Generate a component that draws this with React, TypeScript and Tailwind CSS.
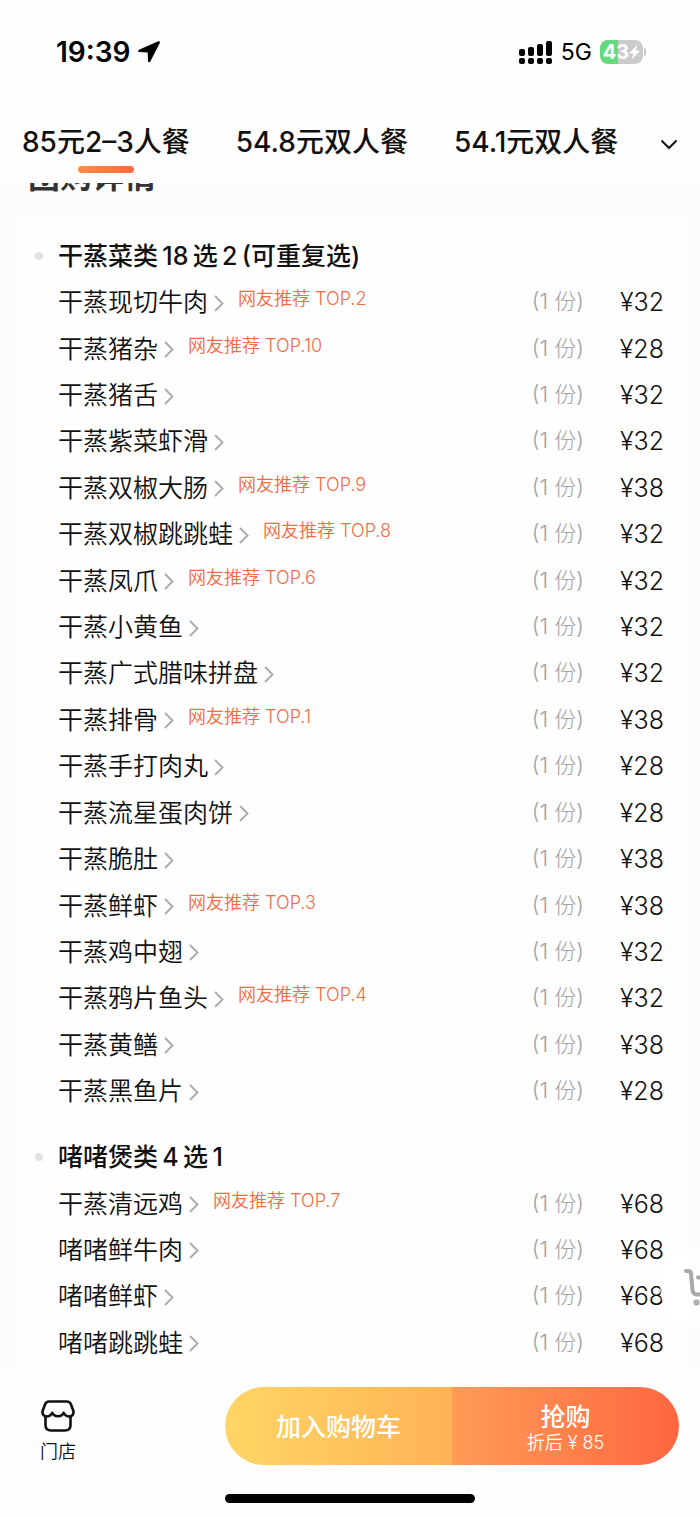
type Dish = { name: string; price: number; top?: number };

type Group = { title: string; dishes: Dish[] };

const tabs = ["85元2–3人餐", "54.8元双人餐", "54.1元双人餐"];

// titles use thin spaces around the counts
const groups: Group[] = [
  {
    title: "干蒸菜类\u200918\u2009选\u20092\u2009(可重复选)",
    dishes: [
      { name: "干蒸现切牛肉", price: 32, top: 2 },
      { name: "干蒸猪杂", price: 28, top: 10 },
      { name: "干蒸猪舌", price: 32 },
      { name: "干蒸紫菜虾滑", price: 32 },
      { name: "干蒸双椒大肠", price: 38, top: 9 },
      { name: "干蒸双椒跳跳蛙", price: 32, top: 8 },
      { name: "干蒸凤爪", price: 32, top: 6 },
      { name: "干蒸小黄鱼", price: 32 },
      { name: "干蒸广式腊味拼盘", price: 32 },
      { name: "干蒸排骨", price: 38, top: 1 },
      { name: "干蒸手打肉丸", price: 28 },
      { name: "干蒸流星蛋肉饼", price: 28 },
      { name: "干蒸脆肚", price: 38 },
      { name: "干蒸鲜虾", price: 38, top: 3 },
      { name: "干蒸鸡中翅", price: 32 },
      { name: "干蒸鸦片鱼头", price: 32, top: 4 },
      { name: "干蒸黄鳝", price: 38 },
      { name: "干蒸黑鱼片", price: 28 },
    ],
  },
  {
    title: "啫啫煲类\u20094\u2009选\u20091",
    dishes: [
      { name: "干蒸清远鸡", price: 68, top: 7 },
      { name: "啫啫鲜牛肉", price: 68 },
      { name: "啫啫鲜虾", price: 68 },
      { name: "啫啫跳跳蛙", price: 68 },
    ],
  },
];

const StatusBar = () => {
  return (
    <div className="flex h-[104px] items-center justify-between pr-[54px] pl-14 text-black">
      <div className="flex items-center gap-2">
        <span className="text-[28px] font-semibold">19:39</span>
        <svg className="h-[22px] w-[22px]" viewBox="0 0 22 22" fill="currentColor">
          <path d="M20.2.3 1 8.8c-1.3.6-1 2.2.5 2.3l8.2.3.3 8.5c0 1.6 1.7 1.9 2.3.6L21.8 1.9C22.2.8 21.3-.2 20.2.3z" />
        </svg>
      </div>
      <div className="flex items-center gap-2">
        <svg className="h-[23px] w-[34px]" viewBox="0 0 34 23" fill="currentColor">
          <rect x="0" y="8" width="6" height="7" rx="2" />
          <rect x="9" y="6" width="6" height="9" rx="2" />
          <rect x="18" y="3" width="6" height="12" rx="2" />
          <rect x="27" y="0" width="6" height="15" rx="2" />
          <rect x="0" y="17" width="6" height="6" rx="2" />
          <rect x="9" y="17" width="6" height="6" rx="2" />
          <rect x="18" y="17" width="6" height="6" rx="2" />
          <rect x="27" y="17" width="6" height="6" rx="2" />
        </svg>
        <span className="text-[23px]">5G</span>
        <div className="flex items-center gap-px">
          <div className="flex h-6 w-[43px] items-center justify-center rounded-lg bg-linear-to-r from-[#65d97c] from-43% to-[#cbcbcb] to-43% text-white">
            <span className="text-[20px] leading-6 font-bold">43</span>
            <svg className="h-4 w-[11px]" viewBox="0 0 11 16" fill="currentColor">
              <path d="M8.5.5.8 8.7c-.3.4-.1.8.3.8h3.4L2.7 15.5 10.3 7.4c.3-.4.1-.9-.4-.9H6.6z" />
            </svg>
          </div>
          <div className="h-2 w-[2px] rounded-r-full bg-[#cbcbcb]"></div>
        </div>
      </div>
    </div>
  );
};

const PackageTabs = () => {
  return (
    <div className="flex items-start justify-between pt-[18px] pr-[22px] pb-[10px] pl-[22px]">
      <div role="tablist" className="flex gap-[46px]">
        {tabs.map((tab, i) => (
          <button
            key={tab}
            role="tab"
            aria-selected={i === 0}
            className="flex flex-col items-center gap-1 text-[28px] leading-10 font-medium whitespace-nowrap"
          >
            {tab}
            {i === 0 && (
              <span className="h-[7px] w-14 rounded-full bg-linear-to-r from-[#ff8c44] to-[#ff6b3c]"></span>
            )}
          </button>
        ))}
      </div>
      <button aria-label="更多套餐" className="flex h-11 items-center">
        <svg className="h-[11px] w-[18px]" viewBox="0 0 18 11" fill="none" stroke="currentColor" strokeWidth="2">
          <path d="m1.5 1.5 7.5 7.5 7.5-7.5" />
        </svg>
      </button>
    </div>
  );
};

const DishRow = ({ dish }: { dish: Dish }) => {
  return (
    <li className="flex items-center">
      <a href="#" className="flex items-center gap-1.5">
        <span className="text-[25px] leading-9 font-[350]">{dish.name}</span>
        <svg className="mt-0.5 h-[17px] w-[10px] text-[#adadad]" viewBox="0 0 10 17" fill="none" stroke="currentColor" strokeWidth="2">
          <path d="m1 1 7.5 7.5L1 16" />
        </svg>
      </a>
      {dish.top && (
        <span className="ml-[14px] pb-1.5 text-[18px] leading-6 font-[350] text-[#f26b45]">
          网友推荐 TOP.{dish.top}
        </span>
      )}
      <span className="ml-auto pb-0.5 text-[22px] leading-9 font-light text-[#a3a3a3]">(1 份)</span>
      <span className="w-20 text-right text-[25px] leading-9 font-[350]">¥{dish.price}</span>
    </li>
  );
};

const DishGroup = ({ group }: { group: Group }) => {
  return (
    <section className="flex flex-col" style={{ flexGrow: group.dishes.length }}>
      <div className="flex h-[46px] items-center gap-[15px]">
        <span className="h-2 w-2 rounded-full bg-[#e2e2e2]"></span>
        <h3 className="text-[25px] leading-9 font-medium">{group.title}</h3>
      </div>
      <ul className="grid grow auto-rows-fr pl-[23px]">
        {group.dishes.map((dish) => (
          <DishRow key={dish.name} dish={dish} />
        ))}
      </ul>
    </section>
  );
};

const BottomBar = () => {
  return (
    <footer className="bg-[#fefefe] px-[21px] pt-[15px] pb-[14px]">
      <div className="flex h-[78px] items-center">
        <a href="#" className="flex w-[74px] flex-col items-center gap-2 pt-3">
          <svg className="h-8 w-[34px]" viewBox="0 0 34 32" fill="none" stroke="currentColor" strokeWidth="2.6" strokeLinejoin="round" strokeLinecap="round">
            <path d="M8 1.5h18c2 0 3.2 1 3.9 2.8l2.4 6.5c.9 3-1 5.7-3.9 5.7-2.6 0-4.7-1.4-5.7-3.7-1 2.3-3 3.500-5.700 3.500s-4.700-1.200-5.700-3.500c-1 2.300-3.100 3.700-5.700 3.700-2.900 0-4.800-2.700-3.900-5.700l2.400-6.500C4.800 2.500 6 1.500 8 1.500z" />
            <path d="M4.500 16.500V25c0 3.500 2 5.500 5.500 5.500h14c3.500 0 5.500-2 5.500-5.500v-8.500" />
          </svg>
          <span className="text-[18px] leading-6 font-[350]">门店</span>
        </a>
        <div className="ml-[130px] flex h-full flex-1 overflow-hidden rounded-full text-white">
          <button className="flex-1 bg-linear-to-r from-[#ffd666] to-[#ffb255] pt-1 text-[25px] font-medium">
            加入购物车
          </button>
          <button className="flex flex-1 flex-col items-center justify-center bg-linear-to-r from-[#ff9b57] to-[#ff6540] pt-1.5">
            <span className="text-[25px] leading-7 font-medium">抢购</span>
            <span className="text-[18px] leading-6 font-[350]">折后 ¥ 85</span>
          </button>
        </div>
      </div>
      <div className="mx-auto mt-[29px] h-[9px] w-[250px] rounded-full bg-black"></div>
    </footer>
  );
};

const App = () => {
  return (
    <div className="flex min-h-screen flex-col bg-[#fcfcfc] font-['Inter','Noto_Sans_CJK_SC',sans-serif] text-[#111]">
      <header className="bg-[#fefefe]">
        <StatusBar />
        <PackageTabs />
      </header>
      <main className="relative flex grow flex-col overflow-hidden">
        <div className="flex h-[34px] items-end overflow-hidden pb-6 pl-7">
          <h2 className="text-[32px] leading-8 font-bold text-[#333]">团购详情</h2>
        </div>
        <div className="mr-3 ml-4 flex grow flex-col gap-5 bg-[#fefefe] pt-4 pr-6 pb-[6px] pl-[19px]">
          {groups.map((group) => (
            <DishGroup key={group.title} group={group} />
          ))}
        </div>
        <button
          aria-label="购物车"
          className="absolute -right-10 bottom-11 flex h-20 w-20 items-center rounded-full bg-white/70 pl-6 text-[#a8a8a8]"
        >
          <svg className="h-10 w-10" viewBox="0 0 40 40" fill="none" stroke="currentColor" strokeWidth="4" strokeLinecap="round" strokeLinejoin="round">
            <path d="M2 3h2c2 0 2.8.8 3 2.8L8.5 22c.3 3 2 4.5 5 4.5H30" />
            <path d="M14 9.5h20l-3 11" />
            <circle cx="12.5" cy="34.500" r="1" fill="currentColor" />
            <circle cx="28" cy="34.500" r="1" fill="currentColor" />
          </svg>
        </button>
      </main>
      <BottomBar />
    </div>
  );
};

export default App;
